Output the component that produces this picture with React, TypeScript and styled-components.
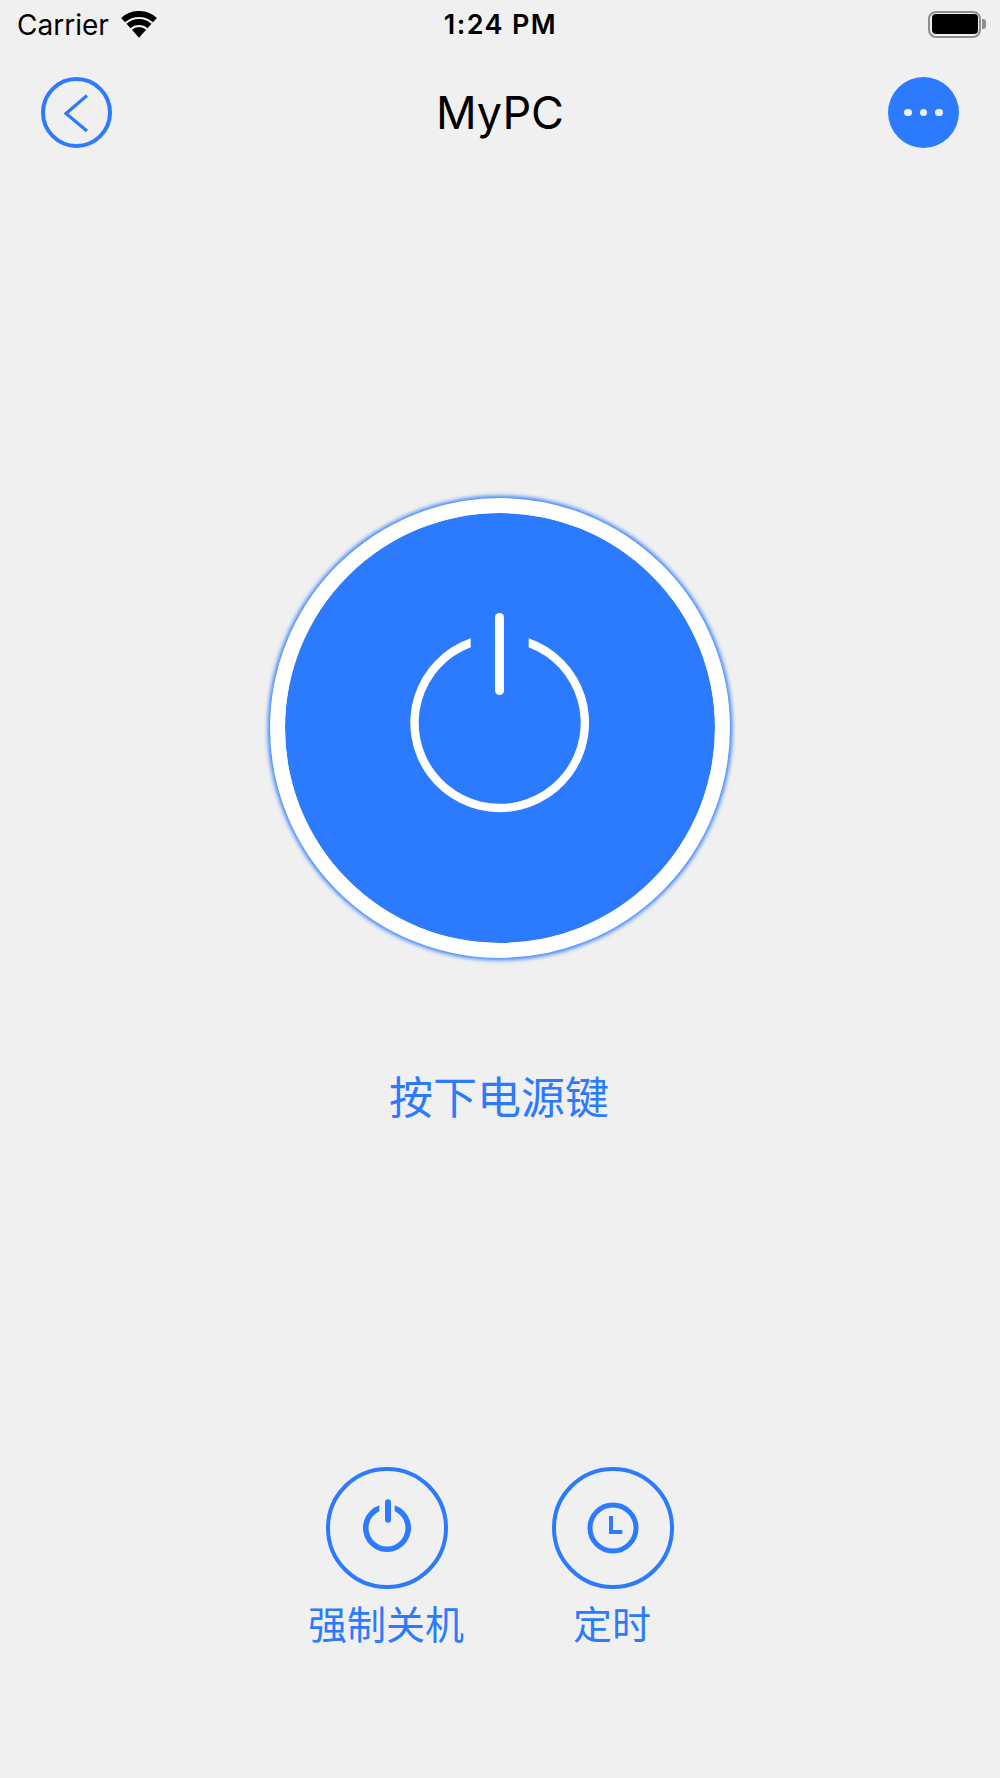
import React from 'react';
import styled, { createGlobalStyle } from 'styled-components';

const BLUE = '#2c7bff';
const LATIN = '"Inter", "Liberation Sans", sans-serif';
const CJK = '"Noto Sans CJK SC", "Noto Sans", sans-serif';

const GlobalStyle = createGlobalStyle`
  html, body {
    margin: 0;
    padding: 0;
    background: #f0f0f0;
  }
`;

const Page = styled.div`
  width: 1000px;
  height: 1778px;
  overflow: hidden;
  background: #f0f0f0;
  display: flex;
  flex-direction: column;
  align-items: center;
  font-family: ${LATIN};
`;

const StatusBar = styled.div`
  width: 100%;
  height: 48px;
  box-sizing: border-box;
  padding: 0 14px 0 17px;
  display: grid;
  grid-template-columns: 1fr auto 1fr;
  align-items: center;
  color: #000;
`;

const Carrier = styled.div`
  display: flex;
  align-items: center;
  gap: 12px;
  font-size: 28px;
  line-height: 34px;
  padding-top: 1px;
`;

const Clock = styled.div`
  font-size: 27px;
  line-height: 34px;
  font-weight: 600;
  letter-spacing: 1.4px;
  padding: 1px 2px 0 0;
`;

const Battery = styled.div`
  justify-self: end;
  display: flex;
  align-items: center;
  gap: 1px;
`;

const BatteryBody = styled.div`
  width: 53px;
  height: 27px;
  box-sizing: border-box;
  border: 2.5px solid #8e8e8e;
  border-radius: 8px;
  padding: 1.5px;
  display: flex;
`;

const BatteryLevel = styled.div`
  flex: 1;
  background: #000;
  border-radius: 4px;
`;

const BatteryCap = styled.div`
  width: 4px;
  height: 10px;
  background: #8e8e8e;
  border-radius: 0 3px 3px 0;
`;

const NavBar = styled.div`
  width: 100%;
  box-sizing: border-box;
  margin-top: 29px;
  padding: 0 41px;
  display: grid;
  grid-template-columns: 71px 1fr 71px;
  align-items: center;
`;

const Title = styled.div`
  text-align: center;
  font-size: 45px;
  color: #000;
`;

const BackButton = styled.div`
  width: 71px;
  height: 71px;
  box-sizing: border-box;
  border: 4px solid ${BLUE};
  border-radius: 50%;
  display: flex;
  align-items: center;
  justify-content: center;
`;

const MoreButton = styled.div`
  width: 71px;
  height: 71px;
  border-radius: 50%;
  background: ${BLUE};
  display: flex;
  align-items: center;
  justify-content: center;
  gap: 8px;
`;

const Dot = styled.span`
  width: 7.5px;
  height: 7.5px;
  border-radius: 50%;
  background: #f0f0f0;
`;

const PowerButton = styled.div`
  margin-top: 350px;
  width: 460px;
  height: 460px;
  box-sizing: border-box;
  border: 15px solid #fff;
  border-radius: 50%;
  background: ${BLUE};
  background-clip: padding-box;
  box-shadow: 0 0 4px 2px ${BLUE};
  display: flex;
  align-items: center;
  justify-content: center;
`;

const Hint = styled.div`
  margin-top: 107px;
  padding-right: 2px;
  font-family: ${CJK};
  font-size: 44px;
  line-height: 60px;
  color: ${BLUE};
`;

const Controls = styled.div`
  margin-top: 342px;
  display: grid;
  grid-template-columns: 226px 226px;
`;

const Control = styled.div`
  display: flex;
  flex-direction: column;
  align-items: center;
  gap: 8px;
`;

const RoundButton = styled.div`
  width: 122px;
  height: 122px;
  box-sizing: border-box;
  border: 4.5px solid ${BLUE};
  border-radius: 50%;
  display: flex;
  align-items: center;
  justify-content: center;
`;

const ControlLabel = styled.div`
  padding-right: 2px;
  font-family: ${CJK};
  font-size: 39px;
  line-height: 50px;
  color: ${BLUE};
`;

const WifiIcon = () => (
  <svg width="36" height="27" viewBox="0 0 36 27" fill="none">
    <path d="M2.1 9.1A23.7 23.7 0 0 1 33.9 9.1" stroke="#000" strokeWidth="6" />
    <path d="M7.5 15A15.7 15.7 0 0 1 28.5 15" stroke="#000" strokeWidth="6" />
    <path d="M18 26.7L10.9 18.8A10.7 10.7 0 0 1 25.1 18.8Z" fill="#000" />
  </svg>
);

const BackIcon = () => (
  <svg width="30" height="40" viewBox="0 0 30 40" fill="none">
    <path d="M25 2.5L4 20.5L25 38" stroke={BLUE} strokeWidth="3.2" />
  </svg>
);

// the arc ends are cut straight, so this is a filled outline and not a stroke
const BigPowerIcon = () => (
  <svg width="180" height="230" viewBox="0 0 180 230">
    <path
      d="M60.7 25.2A89.4 89.4 0 1 0 118.7 25.2V34.2A81 81 0 1 1 60.7 34.2Z"
      fill="#fff"
    />
    <rect x="85" y="0" width="9" height="82" rx="4.5" fill="#fff" />
  </svg>
);

const SmallPowerIcon = () => (
  <svg width="60" height="60" viewBox="0 0 60 60">
    <path
      d="M22.3 7.3A24 24 0 1 0 37.7 7.3V13.2A18.5 18.5 0 1 1 22.3 13.2Z"
      fill={BLUE}
    />
    <rect x="28" y="1.3" width="6" height="23.4" rx="3" fill={BLUE} />
  </svg>
);

const ClockIcon = () => (
  <svg width="60" height="60" viewBox="0 0 60 60" fill="none">
    <circle cx="30" cy="30" r="23" stroke={BLUE} strokeWidth="5" />
    <path d="M26 18h4v14h9.3v4H26z" fill={BLUE} />
  </svg>
);

const App: React.FC = () => {
  return (
    <Page>
      <GlobalStyle />
      <StatusBar>
        <Carrier>
          Carrier
          <WifiIcon />
        </Carrier>
        <Clock>1:24 PM</Clock>
        <Battery>
          <BatteryBody>
            <BatteryLevel />
          </BatteryBody>
          <BatteryCap />
        </Battery>
      </StatusBar>

      <NavBar>
        <BackButton>
          <BackIcon />
        </BackButton>
        <Title>MyPC</Title>
        <MoreButton>
          <Dot />
          <Dot />
          <Dot />
        </MoreButton>
      </NavBar>

      <PowerButton>
        <BigPowerIcon />
      </PowerButton>

      <Hint>按下电源键</Hint>

      <Controls>
        <Control>
          <RoundButton>
            <SmallPowerIcon />
          </RoundButton>
          <ControlLabel>强制关机</ControlLabel>
        </Control>
        <Control>
          <RoundButton>
            <ClockIcon />
          </RoundButton>
          <ControlLabel>定时</ControlLabel>
        </Control>
      </Controls>
    </Page>
  );
};

export default App;
